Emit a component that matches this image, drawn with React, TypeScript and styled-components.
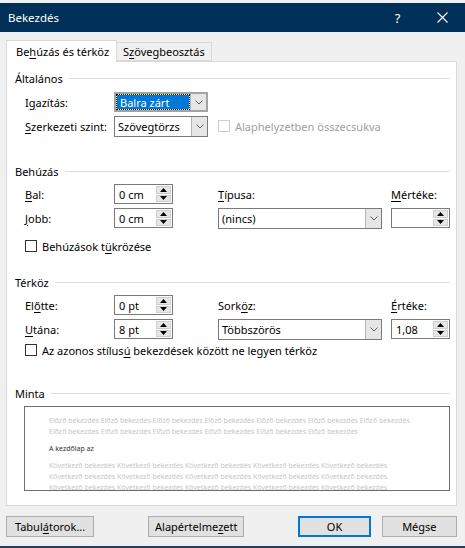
import React from 'react';
import styled, { createGlobalStyle } from 'styled-components';

const Global = createGlobalStyle`
  html, body { margin: 0; padding: 0; background: #f0f0f0; }
  body { font-family: "Noto Sans", "Open Sans", sans-serif; font-size: 11px; color: #000; }
  * { box-sizing: border-box; }
`;

const Window = styled.div`
  width: 465px;
  height: 548px;
  background: #f0f0f0;
  display: flex;
  flex-direction: column;
  padding-top: 3px;
  border-bottom: 2px solid #253e5e;
`;

const TitleBar = styled.div`
  height: 29px;
  background: #002f57;
  color: #fff;
  display: flex;
  align-items: center;
  padding-left: 8px;
  font-size: 11.5px;
`;

const Title = styled.div`
  flex: 1;
`;

const TitleButton = styled.div`
  width: 45px;
  height: 29px;
  display: flex;
  align-items: center;
  justify-content: center;
  font-size: 13px;
`;

const Body = styled.div`
  padding: 8px 8px 0 6px;
  display: flex;
  flex-direction: column;
`;

const TabStrip = styled.div`
  display: flex;
  align-items: flex-end;
  height: 21px;
  position: relative;
  z-index: 1;
`;

const Tab = styled.div<{ $active?: boolean }>`
  height: ${(p) => (p.$active ? '22px' : '19px')};
  margin-bottom: ${(p) => (p.$active ? '-1px' : '0')};
  padding: 0 ${(p) => (p.$active ? '9px' : '6px')};
  background: ${(p) => (p.$active ? '#fff' : '#f0f0f0')};
  border: 1px solid #d9d9d9;
  border-bottom: ${(p) => (p.$active ? 'none' : '1px solid #d9d9d9')};
  border-left: ${(p) => (p.$active ? '1px solid #d9d9d9' : 'none')};
  display: flex;
  align-items: center;
  width: ${(p) => (p.$active ? '111px' : '95px')};
  white-space: nowrap;
`;

const Panel = styled.div`
  height: 445px;
  background: #fff;
  border: 1px solid #d9d9d9;
  padding: 8px 6px 0 0;
  display: flex;
  flex-direction: column;
`;

const SectionHead = styled.div<{ $mt?: number }>`
  height: 16px;
  display: flex;
  align-items: center;
  padding-left: 8px;
  margin-top: ${(p) => p.$mt ?? 0}px;
  color: #000;
  &::after {
    content: '';
    flex: 1;
    height: 1px;
    background: #dcdcdc;
    margin-left: 6px;
  }
`;

const Grid = styled.div<{ $cols: string; $mt: number }>`
  display: grid;
  grid-template-columns: ${(p) => p.$cols};
  grid-auto-rows: 20px;
  row-gap: 4px;
  margin-left: 18px;
  margin-top: ${(p) => p.$mt}px;
  align-items: center;
`;

const Label = styled.span<{ $col?: number; $disabled?: boolean }>`
  grid-column: ${(p) => p.$col ?? 1};
  color: ${(p) => (p.$disabled ? '#a0a0a0' : '#000')};
  white-space: nowrap;
`;

const U = styled.span`
  text-decoration: underline;
  text-underline-offset: 2px;
`;

const Combo = styled.div<{ $col: number; $span?: number; $focus?: boolean }>`
  grid-column: ${(p) => p.$col} / span ${(p) => p.$span ?? 1};
  height: ${(p) => (p.$focus ? '20px' : '21px')};
  border: ${(p) => (p.$focus ? '2px solid #a3a3a3' : '1px solid #7a7a7a')};
  background: #fff;
  display: flex;
  align-items: stretch;
`;

const ComboText = styled.div<{ $selected?: boolean }>`
  flex: 1;
  display: flex;
  align-items: center;
  padding-left: 3px;
  margin: ${(p) => (p.$selected ? '1px' : '0')};
  background: ${(p) => (p.$selected ? '#0078d7' : 'transparent')};
  color: ${(p) => (p.$selected ? '#fff' : '#000')};
  outline: ${(p) => (p.$selected ? '1px dotted #000' : 'none')};
  white-space: nowrap;
`;

const ComboButton = styled.div`
  width: 16px;
  background: #e6e6e6;
  border-left: 1px solid #b5b5b5;
  display: flex;
  align-items: center;
  justify-content: center;
`;

const Chevron = () => (
  <svg width="8" height="5" viewBox="0 0 8 5">
    <path d="M0.5 0.5 L4 4 L7.5 0.5" fill="none" stroke="#606060" strokeWidth="1" />
  </svg>
);

const Spin = styled.div<{ $col: number }>`
  grid-column: ${(p) => p.$col};
  height: 20px;
  border: 1px solid #7a7a7a;
  background: #fff;
  display: flex;
  align-items: stretch;
`;

const SpinText = styled.div`
  flex: 1;
  display: flex;
  align-items: center;
  padding-left: 4px;
`;

const SpinButtons = styled.div`
  width: 16px;
  padding: 1px 1px 1px 0;
  display: flex;
  flex-direction: column;
  gap: 1px;
`;

const SpinBtn = styled.div`
  flex: 1;
  background: #e6e6e6;
  border: 1px solid #cfcfcf;
  display: flex;
  align-items: center;
  justify-content: center;
`;

const Tri = ({ up }: { up?: boolean }) => (
  <svg width="7" height="4" viewBox="0 0 7 4">
    <path d={up ? 'M0 4 L3.5 0 L7 4 Z' : 'M0 0 L3.5 4 L7 0 Z'} fill="#000" />
  </svg>
);

const Spinner = ({ col, value }: { col: number; value: string }) => (
  <Spin $col={col}>
    <SpinText>{value}</SpinText>
    <SpinButtons>
      <SpinBtn>
        <Tri up />
      </SpinBtn>
      <SpinBtn>
        <Tri />
      </SpinBtn>
    </SpinButtons>
  </Spin>
);

const CheckRow = styled.label<{ $mt: number; $col?: number; $inGrid?: boolean }>`
  display: flex;
  align-items: center;
  gap: 5px;
  height: 16px;
  margin-left: ${(p) => (p.$inGrid ? 0 : 18)}px;
  margin-top: ${(p) => p.$mt}px;
  grid-column: ${(p) => p.$col ?? 'auto'};
  white-space: nowrap;
`;

const Box = styled.span<{ $disabled?: boolean }>`
  width: 12px;
  height: 12px;
  border: 1px solid ${(p) => (p.$disabled ? '#cccccc' : '#333')};
  background: #fff;
  flex: none;
`;

const Preview = styled.div`
  margin: 5px 0 0 17px;
  height: 85px;
  border: 1px solid #6e6e6e;
  background: #fff;
  overflow: hidden;
  padding: 8px 24px 0 24px;
  font-size: 7px;
  line-height: 11px;
  color: #c6c6c6;
  display: flex;
  flex-direction: column;
`;

const PrevLine = styled.div<{ $mt?: number; $dark?: boolean }>`
  margin-top: ${(p) => p.$mt ?? 0}px;
  color: ${(p) => (p.$dark ? '#333' : '#c6c6c6')};
  white-space: nowrap;
  flex: none;
`;

const ButtonRow = styled.div`
  display: flex;
  margin-top: 10px;
  height: 21px;
`;

const Button = styled.div<{ $w: number; $ml?: number; $default?: boolean }>`
  width: ${(p) => p.$w}px;
  margin-left: ${(p) => p.$ml ?? 0}px;
  height: 21px;
  background: #e1e1e1;
  border: ${(p) => (p.$default ? '2px solid #0078d7' : '1px solid #adadad')};
  display: flex;
  align-items: center;
  justify-content: center;
  white-space: nowrap;
`;

const rep = (s: string, n: number) => Array(n).fill(s).join(' ');

export default function App() {
  return (
    <>
      <Global />
      <Window>
        <TitleBar>
          <Title>Bekezdés</Title>
          <TitleButton>?</TitleButton>
          <TitleButton>
            <svg width="11" height="11" viewBox="0 0 11 11">
              <path d="M0.5 0.5 L10.5 10.5 M10.5 0.5 L0.5 10.5" stroke="#fff" strokeWidth="1.1" />
            </svg>
          </TitleButton>
        </TitleBar>
        <Body>
          <TabStrip>
            <Tab $active>
              Be<U>h</U>úzás és térköz
            </Tab>
            <Tab>
              S<U>z</U>övegbeosztás
            </Tab>
          </TabStrip>
          <Panel>
            <SectionHead>Általános</SectionHead>
            <Grid $cols="89px 94px 10px 1fr" $mt={6}>
              <Label>
                I<U>g</U>azítás:
              </Label>
              <Combo $col={2} $focus>
                <ComboText $selected>Balra zárt</ComboText>
                <ComboButton>
                  <Chevron />
                </ComboButton>
              </Combo>
              <Label>
                <U>S</U>zerkezeti szint:
              </Label>
              <Combo $col={2}>
                <ComboText>Szövegtörzs</ComboText>
                <ComboButton>
                  <Chevron />
                </ComboButton>
              </Combo>
              <CheckRow $mt={0} $col={4} $inGrid>
                <Box $disabled />
                <Label $disabled>Alaphelyzetben összecsukva</Label>
              </CheckRow>
            </Grid>

            <SectionHead $mt={27}>Behúzás</SectionHead>
            <Grid $cols="89px 59px 45px 164px 9px 59px" $mt={5}>
              <Label>
                <U>B</U>al:
              </Label>
              <Spinner col={2} value="0 cm" />
              <Label $col={4}>
                <U>T</U>ípusa:
              </Label>
              <Label $col={6}>
                <U>M</U>értéke:
              </Label>
              <Label>
                <U>J</U>obb:
              </Label>
              <Spinner col={2} value="0 cm" />
              <Combo $col={4}>
                <ComboText>(nincs)</ComboText>
                <ComboButton>
                  <Chevron />
                </ComboButton>
              </Combo>
              <Spinner col={6} value="" />
            </Grid>
            <CheckRow $mt={10}>
              <Box />
              <span>
                Behúzások t<U>ü</U>krözése
              </span>
            </CheckRow>

            <SectionHead $mt={20}>Térköz</SectionHead>
            <Grid $cols="89px 59px 45px 164px 9px 59px" $mt={5}>
              <Label>
                El<U>ő</U>tte:
              </Label>
              <Spinner col={2} value="0 pt" />
              <Label $col={4}>
                Sork<U>ö</U>z:
              </Label>
              <Label $col={6}>
                <U>É</U>rtéke:
              </Label>
              <Label>
                <U>U</U>tána:
              </Label>
              <Spinner col={2} value="8 pt" />
              <Combo $col={4}>
                <ComboText>Többszörös</ComboText>
                <ComboButton>
                  <Chevron />
                </ComboButton>
              </Combo>
              <Spinner col={6} value="1,08" />
            </Grid>
            <CheckRow $mt={3}>
              <Box />
              <span>
                Az azonos stílus<U>ú</U> bekezdések között ne legyen térköz
              </span>
            </CheckRow>

            <SectionHead $mt={27}>Minta</SectionHead>
            <Preview>
              <PrevLine>{rep('Előző bekezdés', 7)}</PrevLine>
              <PrevLine>{rep('Előző bekezdés', 6)}</PrevLine>
              <PrevLine $mt={6} $dark>
                A kezdőlap az
              </PrevLine>
              <PrevLine $mt={6}>{rep('Következő bekezdés', 5)}</PrevLine>
              <PrevLine>{rep('Következő bekezdés', 5)}</PrevLine>
              <PrevLine>{rep('Következő bekezdés', 5)}</PrevLine>
            </Preview>
          </Panel>
          <ButtonRow>
            <Button $w={89}>
              Tabul<U>á</U>torok...
            </Button>
            <Button $w={97} $ml={54}>
              Alapértelme<U>z</U>ett
            </Button>
            <Button $w={73} $ml={54} $default>
              OK
            </Button>
            <Button $w={76} $ml={11}>
              Mégse
            </Button>
          </ButtonRow>
        </Body>
      </Window>
    </>
  );
}
